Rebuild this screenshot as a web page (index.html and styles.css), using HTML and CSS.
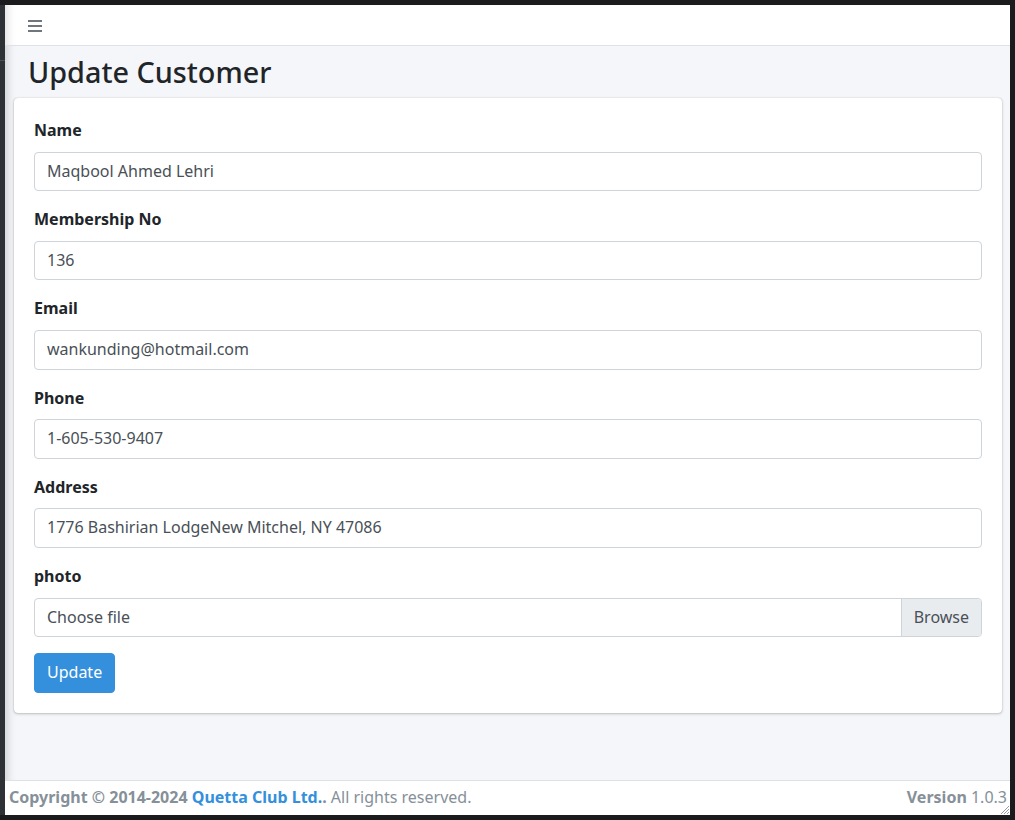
FILE: index.html
```html
<!DOCTYPE html>
<html lang="en">
<head>
<meta charset="utf-8">
<title>Update Customer</title>
<link rel="stylesheet" href="styles.css">
</head>
<body>
<div class="screen">
  <aside class="sidebar"><div class="brand"></div></aside>
  <div class="app">
    <nav class="navbar">
      <a class="pushmenu" href="#" aria-label="Menu">
        <svg width="14" height="12" viewBox="0 0 14 12"><rect x="0" y="0" width="14" height="2" fill="#6f767d"/><rect x="0" y="5" width="14" height="2" fill="#6f767d"/><rect x="0" y="10" width="14" height="2" fill="#6f767d"/></svg>
      </a>
    </nav>
    <main class="content">
      <h1 class="page-title">Update Customer</h1>
      <div class="card">
        <form class="card-body">
          <div class="form-group">
            <label class="label">Name</label>
            <div class="input">Maqbool Ahmed Lehri</div>
          </div>
          <div class="form-group">
            <label class="label">Membership No</label>
            <div class="input">136</div>
          </div>
          <div class="form-group">
            <label class="label">Email</label>
            <div class="input">wankunding@hotmail.com</div>
          </div>
          <div class="form-group">
            <label class="label">Phone</label>
            <div class="input">1-605-530-9407</div>
          </div>
          <div class="form-group">
            <label class="label">Address</label>
            <div class="input">1776 Bashirian LodgeNew Mitchel, NY 47086</div>
          </div>
          <div class="form-group">
            <label class="label">photo</label>
            <div class="file-input">
              <span class="file-text">Choose file</span>
              <span class="file-btn">Browse</span>
            </div>
          </div>
          <button class="btn-primary" type="button">Update</button>
        </form>
      </div>
    </main>
    <footer class="footer">
      <div><strong>Copyright © 2014-2024 <a class="brand-link" href="#">Quetta Club Ltd.</a>.</strong> All rights reserved.</div>
      <div><strong>Version</strong> 1.0.3</div>
    </footer>
    <svg class="grip" width="12" height="12" viewBox="0 0 12 12"><path d="M11 3 L3 11 M11 6 L6 11 M11 9 L9 11" stroke="#9a9ea3" stroke-width="1" fill="none"/></svg>
  </div>
</div>
</body>
</html>
```
FILE: styles.css
```css
* { box-sizing: border-box; }
html, body { margin: 0; padding: 0; }
body {
  background: #1b1b1d;
  font-family: "Noto Sans", "Open Sans", sans-serif;
  font-size: 16px;
  line-height: 1.6;
  color: #212529;
}
.screen {
  width: 1015px;
  height: 820px;
  padding: 5px 5px 5px 0;
  display: flex;
}
.sidebar {
  width: 5px;
  background: #2e3237;
  flex: none;
}
.brand {
  height: 56px;
  border-bottom: 1px solid #4a5057;
}
.app {
  position: relative;
  flex: 1;
  display: flex;
  flex-direction: column;
  background: #f4f6f9;
  box-shadow: inset 10px 0 10px -8px rgba(0,0,0,0.18);
  overflow: hidden;
}
.navbar {
  height: 41px;
  flex: none;
  background: #fff;
  border-bottom: 1px solid #dee2e6;
  display: flex;
  align-items: flex-start;
  padding: 15px 0 0 23px;
  box-shadow: inset 10px 0 10px -8px rgba(0,0,0,0.14);
}
.pushmenu { display: block; height: 12px; line-height: 0; }
.content {
  flex: 1;
  padding: 8px 8px 0 9px;
}
.page-title {
  margin: 0 0 9px 14px;
  font-size: 28.8px;
  font-weight: 500;
  line-height: 35px;
  color: #1f2529;
}
.card {
  background: #fff;
  border-radius: 4px;
  box-shadow: 0 0 1px rgba(0,0,0,0.3), 0 1px 3px rgba(0,0,0,0.22);
}
.card-body {
  padding: 20px;
  margin: 0;
}
.form-group { margin-bottom: 16px; }
.label {
  display: block;
  font-weight: 700;
  margin-bottom: 8px;
  color: #212529;
}
.input, .file-input {
  height: 39.6px;
  border: 1px solid #ced4da;
  border-radius: 4px;
  background: #fff;
  color: #495057;
  padding: 6px 12px;
  line-height: 25.6px;
}
.file-input {
  display: flex;
  padding: 0;
  overflow: hidden;
}
.file-text { flex: 1; padding: 6px 12px; }
.file-btn {
  background: #e9ecef;
  border-left: 1px solid #ced4da;
  padding: 6px 12px;
  color: #495057;
}
.btn-primary {
  display: block;
  height: 39.6px;
  padding: 6px 12px;
  border: 1px solid #3490dc;
  background: #3490dc;
  color: #fff;
  font: inherit;
  line-height: 25.6px;
  border-radius: 4px;
}
.footer {
  flex: none;
  height: 35px;
  background: #fff;
  border-top: 1px solid #dee2e6;
  color: #869099;
  padding: 4px 3px 0 4px;
  display: flex;
  justify-content: space-between;
  white-space: nowrap;
}
.footer strong { font-weight: 700; }
.brand-link { color: #3490dc; text-decoration: none; }
.grip {
  position: absolute;
  right: 0;
  bottom: 0;
}
```
